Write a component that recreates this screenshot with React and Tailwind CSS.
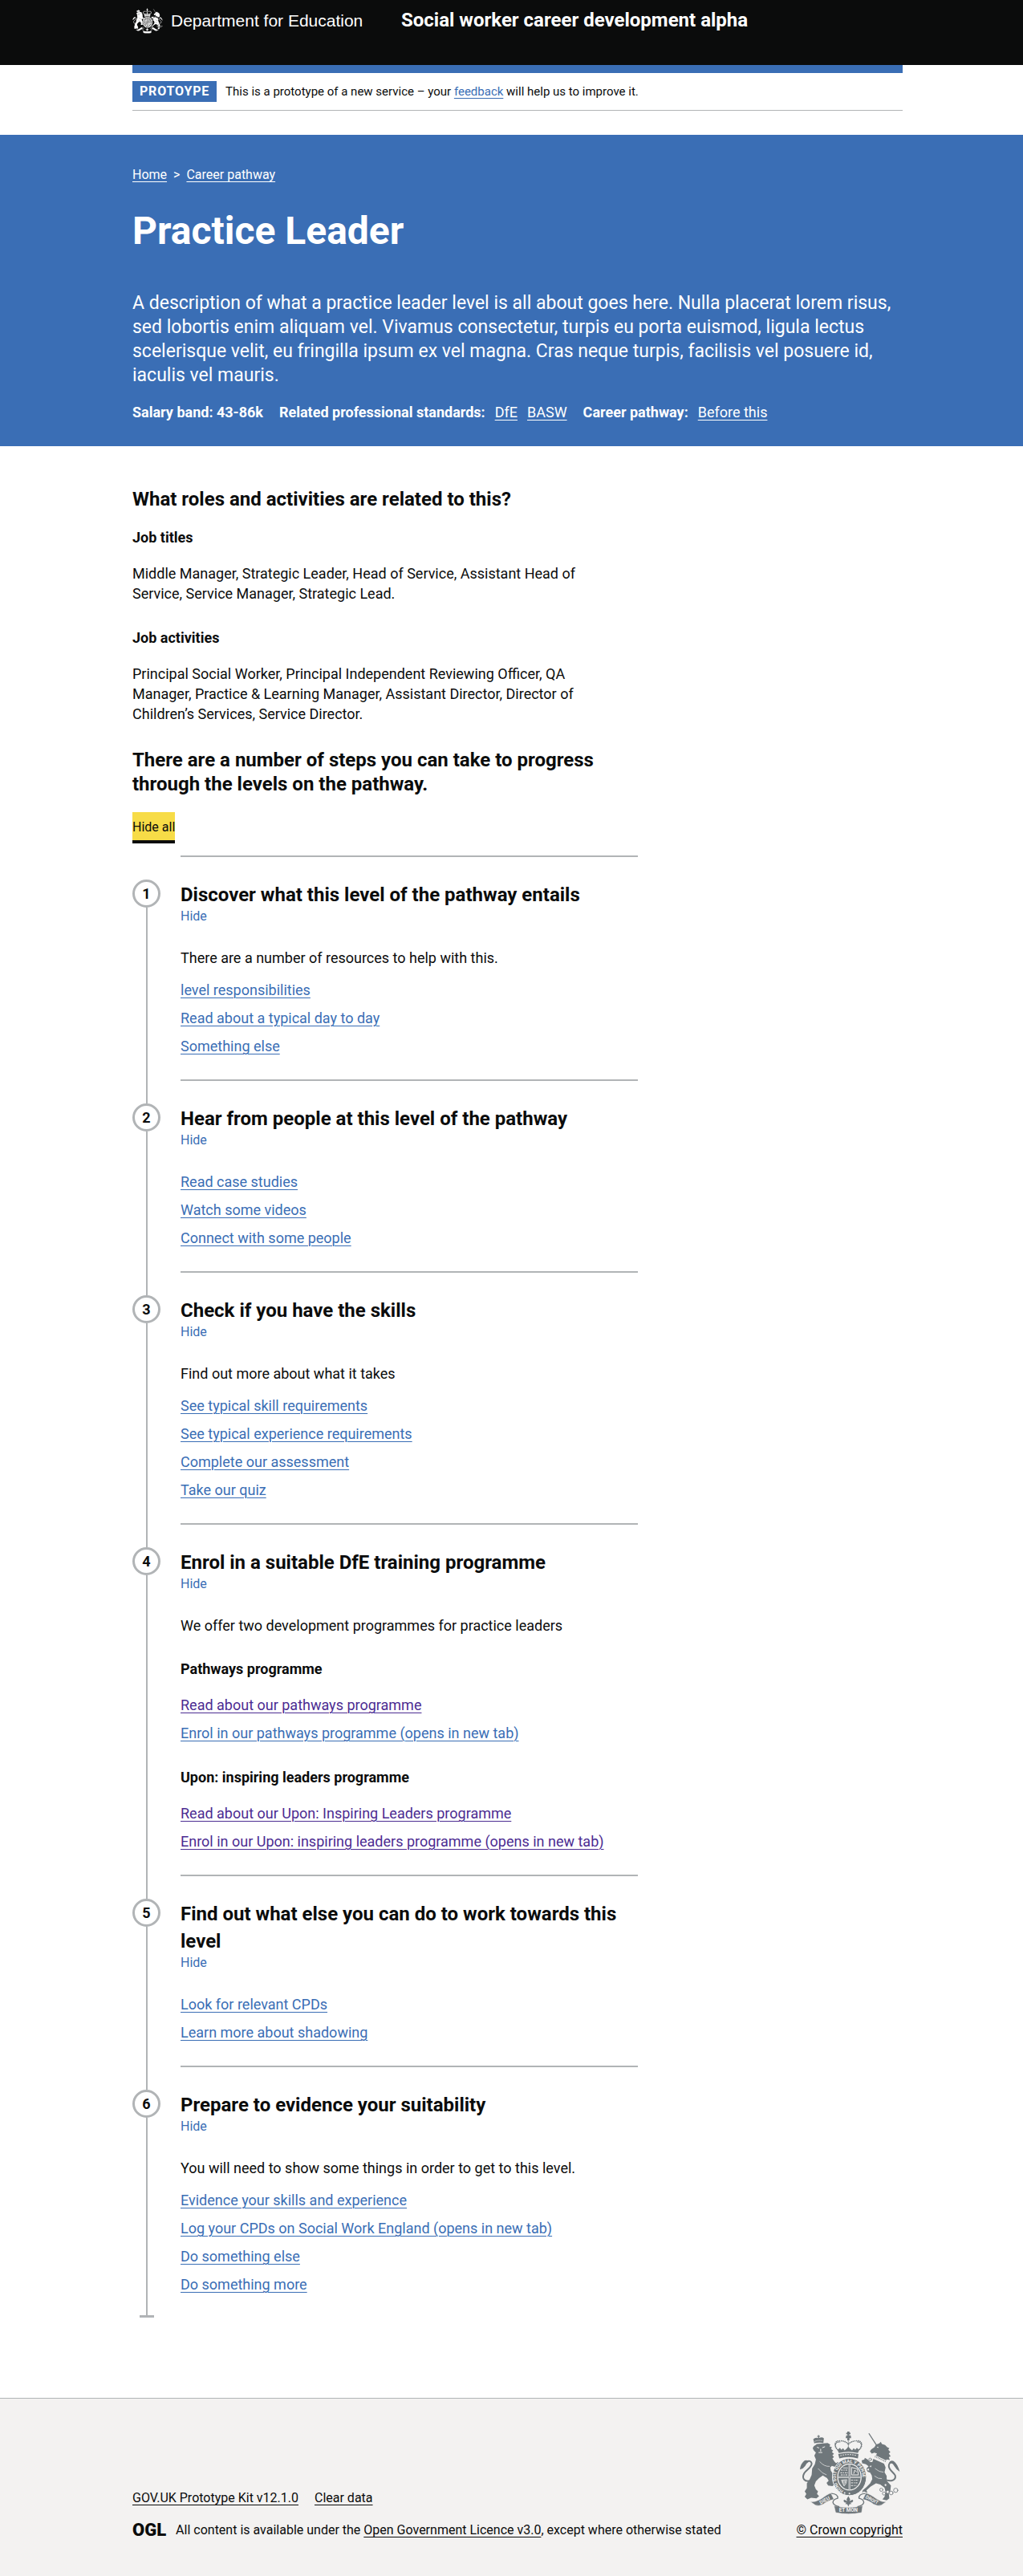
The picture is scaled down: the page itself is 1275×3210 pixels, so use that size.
const focusRing = "focus-visible:outline-3 focus-visible:outline-[#ffdd00]";
const blueLink = "text-[#3a6eb5] underline underline-offset-3 decoration-1 " + focusRing;
const purpleLink = "text-[#4c2c92] underline underline-offset-3 decoration-1 " + focusRing;
const whiteLink = "font-normal text-white underline underline-offset-3 decoration-1 " + focusRing;
const darkLink = "text-[#0b0c0c] underline underline-offset-3 decoration-1 " + focusRing;

function Container({ className = "", children }) {
  return (
    <div className={"px-8 lg:pr-0 lg:pl-[15px] " + className}>
      <div className="mx-auto max-w-[960px]">{children}</div>
    </div>
  );
}

/* Royal coat of arms. `ink` is the drawing, `paper` is the ground seen through it. */
function RoyalArms({ className, ink, paper, motto = false }) {
  return (
    <svg viewBox="33 35 380 312" className={className} aria-hidden="true">
      <g fill={ink} stroke="none">
        {/* lion's crown */}
        <path d="M90 82 L86 66 Q94 58 104 62 L104 57 L101 57 L101 54 L104 54 L104 51 L108 51 L108 54 L111 54 L111 57 L108 57 L108 61 Q120 56 126 63 L124 80 Q106 76 90 82 Z" />
        {/* lion */}
        <path d="M88 92 L100 84 L124 82 L140 80 L150 86 L147 93 L156 96 L153 103 L161 109 L156 114 L164 121 L158 126 L164 133 L158 138 L166 150 L172 156 L178 152 L184 158 L178 166 L168 170 L156 166 L150 172 L152 184 L160 196 L166 206 L160 212 L168 218 L160 228 L166 236 L158 242 L142 240 L136 230 L144 222 L138 212 L122 202 L108 212 L96 224 L90 240 L96 254 L104 262 L100 272 L108 280 L98 288 L78 286 L64 292 L54 282 L60 272 L54 262 L62 250 L62 232 L72 218 L80 200 L82 176 L92 160 L96 142 L90 128 L96 116 L88 108 L84 100 Z" />
        {/* lion's tail tuft */}
        <path d="M36 180 Q38 158 54 146 Q64 142 70 150 Q60 156 56 166 Q50 176 36 180 Z" />
        {/* unicorn head and neck */}
        <path d="M299 112 L304 104 L316 96 L322 86 L334 82 L340 76 L344 84 L356 88 L364 96 L372 100 L368 106 L376 114 L370 120 L377 130 L370 134 L374 144 L362 142 L356 152 L316 134 L326 120 L316 116 L306 120 Z" />
        {/* unicorn body */}
        <path d="M312 140 L352 158 L358 172 L354 190 L362 204 L362 222 L378 240 L376 258 L370 270 L372 288 L362 296 L346 292 L354 282 L358 266 L354 248 L338 236 L322 232 L302 244 L286 258 L290 268 L276 262 L270 268 L272 258 L286 246 L300 232 L308 216 L306 202 L300 192 L290 188 L286 176 L294 168 L284 160 L270 156 L268 146 L278 142 L280 136 L290 142 L300 152 L308 152 Z" />
        {/* unicorn's tail tuft */}
        <path d="M411 188 Q404 160 388 148 Q376 142 370 156 Q384 154 390 166 Q398 180 411 188 Z" />
      </g>
      <g fill="none" stroke={ink} strokeLinecap="round">
        <path strokeWidth="6" d="M76 222 C52 228 42 212 52 194 C60 180 82 172 80 156 C78 148 70 146 62 149" />
        <path strokeWidth="6" d="M356 218 C380 228 398 218 394 202 C388 190 370 182 370 166 C370 158 376 152 382 153" />
        <path strokeWidth="4" strokeLinecap="butt" d="M295 44 L326 92" />
        {/* chain */}
        <g strokeWidth="2.5" fill={paper}>
          <circle cx="300" cy="142" r="5" />
          <circle cx="293" cy="180" r="5" />
          <circle cx="302" cy="168" r="4" />
          <circle cx="358" cy="238" r="5" />
          <circle cx="342" cy="256" r="6" />
          <circle cx="352" cy="270" r="6" />
          <circle cx="366" cy="264" r="6" />
          <circle cx="379" cy="268" r="7" />
          <circle cx="396" cy="258" r="8" />
        </g>
      </g>
      {/* faces and collar picked out in the ground colour */}
      <g fill="none" stroke={paper} strokeWidth="3">
        <path d="M100 96 L108 99 M120 98 L130 94 M114 102 L114 112 M106 116 L120 116" />
        <path d="M92 74 Q106 68 122 72" strokeDasharray="3 3" />
        <path d="M318 130 L358 150" strokeWidth="9" />
        <path d="M326 96 L331 97" />
        <path d="M110 150 Q128 170 148 168 M104 176 Q120 196 136 200" strokeWidth="2" />
        <path d="M318 176 Q334 190 350 190 M316 204 Q330 216 344 214" strokeWidth="2" />
      </g>
      <path fill="none" stroke={ink} strokeWidth="4" strokeDasharray="3 3" d="M318 130 L358 150" />

      {/* crown */}
      <g fill="none" stroke={ink}>
        <path strokeWidth="5" strokeLinecap="round" strokeDasharray="0.1 6.5" d="M182 110 C160 90 166 70 188 72 C202 72 214 78 218 86 C222 78 236 72 250 72 C270 70 276 92 254 110" />
        <path strokeWidth="4" strokeLinecap="round" strokeDasharray="0.1 6" d="M218 70 L218 104" />
        <path strokeWidth="3" d="M180 108 C162 92 168 75 188 76 M256 108 C274 92 268 75 250 76" />
      </g>
      <g fill={ink}>
        <path d="M214 70 L214 62 L208 62 L209 56 L211 51 L215 53 L214 47 L210 47 L210 42 L214 42 L214 37 L222 37 L222 42 L226 42 L226 47 L222 47 L221 53 L226 51 L228 56 L228 62 L222 62 L222 70 Z" />
        <path d="M178 106 L186 98 L192 106 L198 100 L204 108 L211 102 L218 94 L225 102 L232 108 L238 100 L244 106 L250 98 L258 106 L254 118 Q218 108 182 118 Z" />
        <path d="M180 122 Q218 112 256 122 L254 138 Q218 128 184 138 Z" />
      </g>
      <path fill="none" stroke={paper} strokeWidth="3" strokeDasharray="5 4" d="M188 128 Q218 119 250 128" />

      {/* garter and shield */}
      <ellipse cx="222" cy="208" rx="64" ry="70" fill={ink} stroke={paper} strokeWidth="3" />
      <ellipse cx="222" cy="208" rx="46" ry="51" fill={paper} />
      <ellipse cx="222" cy="208" rx="42" ry="47" fill={ink} />
      <g fill="none" stroke={paper}>
        <path strokeWidth="6" d="M222 160 V256 M180 208 H264" />
        <path strokeWidth="3" strokeDasharray="7 3 4 3" d="M190 182 H216 M188 192 H217 M190 200 H217 M228 220 H256 M228 230 H254 M228 240 H248" />
        <path strokeWidth="3" d="M230 172 L252 178 L256 200 L230 200 Z M238 196 L242 182 L250 190" />
        <path strokeWidth="2.5" d="M192 220 L212 218 Q212 234 202 242 Z M197 221 V230 M202 220 V237 M207 220 V232" />
        <path strokeWidth="2.5" d="M198 174 H216" />
      </g>
      <path fill="none" stroke={ink} strokeWidth="2" d="M222 160 V256 M180 208 H264" />
      {motto ? (
        <>
          <path id="garter" fill="none" d="M200 259 A50 55 0 1 1 246 257" />
          <text fill={paper} fontFamily="Roboto, sans-serif" fontWeight="700" fontSize="17">
            <textPath href="#garter">HONI SOIT QUI MAL Y PENSE</textPath>
          </text>
        </>
      ) : (
        <ellipse cx="222" cy="208" rx="55" ry="60" fill="none" stroke={paper} strokeWidth="8" strokeDasharray="3 5" />
      )}
      <g fill={paper}>
        <circle cx="204" cy="268" r="3" />
        <circle cx="222" cy="270" r="3" />
      </g>

      {/* scroll */}
      <g fill={ink} stroke={paper} strokeWidth="2">
        <path d="M74 300 Q92 304 116 290 Q140 272 152 268 L164 292 Q142 296 124 310 Q106 320 94 314 Z" />
        <path d="M362 300 Q344 304 324 290 Q300 272 284 268 L272 292 Q296 296 312 310 Q330 320 342 314 Z" />
        <path d="M164 316 Q218 328 272 316 L268 342 Q218 352 170 342 Z" />
      </g>
      <g fill="none" stroke={ink} strokeWidth="4">
        <path d="M154 270 Q180 272 178 288 Q160 292 160 304 Q164 316 184 320" />
        <path d="M282 270 Q256 272 258 288 Q276 292 276 304 Q272 316 252 320" />
      </g>
      <path fill={ink} d="M218 280 L225 292 L222 299 L228 296 Q236 290 236 299 Q234 305 225 305 L230 309 L222 310 L218 319 L214 310 L206 309 L211 305 Q202 305 200 299 Q200 290 208 296 L214 299 L211 292 Z" />
      {motto && (
        <g fill={paper} fontFamily="Roboto, sans-serif" fontWeight="700" fontSize="19" textAnchor="middle">
          <text transform="translate(132 301) rotate(-28)">DIEU</text>
          <text transform="translate(304 299) rotate(28)" fontSize="18">DROIT</text>
          <text x="218" y="340">ET MON</text>
        </g>
      )}
    </svg>
  );
}

const steps = [
  {
    title: "Discover what this level of the pathway entails",
    intro: "There are a number of resources to help with this.",
    groups: [{ links: [["level responsibilities"], ["Read about a typical day to day"], ["Something else"]] }],
  },
  {
    title: "Hear from people at this level of the pathway",
    groups: [{ links: [["Read case studies"], ["Watch some videos"], ["Connect with some people"]] }],
  },
  {
    title: "Check if you have the skills",
    intro: "Find out more about what it takes",
    groups: [
      {
        links: [
          ["See typical skill requirements"],
          ["See typical experience requirements"],
          ["Complete our assessment"],
          ["Take our quiz"],
        ],
      },
    ],
  },
  {
    title: "Enrol in a suitable DfE training programme",
    intro: "We offer two development programmes for practice leaders",
    groups: [
      {
        heading: "Pathways programme",
        links: [
          ["Read about our pathways programme", true],
          ["Enrol in our pathways programme (opens in new tab)"],
        ],
      },
      {
        heading: "Upon: inspiring leaders programme",
        links: [
          ["Read about our Upon: Inspiring Leaders programme", true],
          ["Enrol in our Upon: inspiring leaders programme (opens in new tab)", true],
        ],
      },
    ],
  },
  {
    title: "Find out what else you can do to work towards this level",
    groups: [{ links: [["Look for relevant CPDs"], ["Learn more about shadowing"]] }],
  },
  {
    title: "Prepare to evidence your suitability",
    intro: "You will need to show some things in order to get to this level.",
    groups: [
      {
        links: [
          ["Evidence your skills and experience"],
          ["Log your CPDs on Social Work England (opens in new tab)"],
          ["Do something else"],
          ["Do something more"],
        ],
      },
    ],
  },
];

function Step({ number, step, first, last }) {
  return (
    <li className="flex gap-[25px]">
      <div className="flex w-[35px] shrink-0 flex-col items-center">
        <span className={first ? "h-[30px] w-[2px]" : "h-[30px] w-[2px] bg-[#b1b4b6]"} />
        <span className="flex size-[35px] items-center justify-center rounded-full border-3 border-[#b1b4b6] text-[18px] leading-[25px] font-bold">
          {number}
        </span>
        <span className="w-[2px] grow bg-[#b1b4b6]" />
        {last && <span className="h-[3px] w-[18px] bg-[#b1b4b6]" />}
      </div>
      <div className="grow basis-0 border-t-2 border-[#b1b4b6] pt-[30px] pb-[29px]">
        <h2 className="text-[24px] leading-[34px] font-bold">{step.title}</h2>
        <button type="button" className={"block cursor-pointer text-[16px] leading-[20px] text-[#3a6eb5] " + focusRing}>
          Hide
        </button>
        <div className="pt-[29px]">
          {step.intro && <p className={step.groups[0].heading ? "mb-[29px]" : "mb-[15px]"}>{step.intro}</p>}
          <div className="flex flex-col gap-[30px]">
            {step.groups.map((group, i) => (
              <div key={i}>
                {group.heading && <h3 className="mb-5 font-bold">{group.heading}</h3>}
                <ul className="flex flex-col gap-[10px]">
                  {group.links.map(([label, visited]) => (
                    <li key={label}>
                      <a href="#" className={visited ? purpleLink : blueLink}>
                        {label}
                      </a>
                    </li>
                  ))}
                </ul>
              </div>
            ))}
          </div>
        </div>
      </div>
    </li>
  );
}

export default function App() {
  return (
    <div className="min-h-screen bg-white font-['Roboto',sans-serif] text-[18px] leading-[25px] text-[#0b0c0c]">
      <header className="bg-[#0b0c0c] text-white">
        <Container>
          <div className="grid min-h-[81px] grid-cols-[auto_1fr] items-start gap-x-5 pt-[10px] sm:grid-cols-[335px_1fr] sm:gap-x-0">
            <a href="#" className={"flex items-center gap-[10px] " + focusRing}>
              <RoyalArms className="h-8 w-[38px]" ink="#ffffff" paper="#0b0c0c" />
              <span className="font-['Liberation_Sans',sans-serif] text-[21px] leading-[32px]">
                Department for Education
              </span>
            </a>
            <a href="#" className={"text-[24px] leading-[30px] font-bold " + focusRing}>
              Social worker career development alpha
            </a>
          </div>
        </Container>
      </header>

      <Container>
        <div className="border-t-10 border-[#3a6eb5]">
          <div className="flex items-center gap-[11px] border-b border-[#b1b4b6] py-[10px] text-[15px]">
            <strong className="bg-[#3a6eb5] px-[9px] text-[16px] leading-[26px] font-bold tracking-wider text-white uppercase">
              Protoype
            </strong>
            <p>
              This is a prototype of a new service – your{" "}
              <a href="#" className={blueLink}>
                feedback
              </a>{" "}
              will help us to improve it.
            </p>
          </div>
        </div>
      </Container>

      <section className="mt-[30px] bg-[#3a6eb5] text-white">
        <Container className="pt-10 pb-[30px]">
          <nav aria-label="Breadcrumb" className="flex gap-2 text-[16px] leading-[20px]">
            <a href="#" className={whiteLink}>
              Home
            </a>
            <span>&gt;</span>
            <a href="#" className={whiteLink}>
              Career pathway
            </a>
          </nav>
          <h1 className="mt-[35px] text-[48px] leading-[50px] font-bold">Practice Leader</h1>
          <p className="mt-[50px] text-[23px] leading-[30px]">
            A description of what a practice leader level is all about goes here. Nulla placerat lorem risus, sed
            lobortis enim aliquam vel. Vivamus consectetur, turpis eu porta euismod, ligula lectus scelerisque velit,
            eu fringilla ipsum ex vel magna. Cras neque turpis, facilisis vel posuere id, iaculis vel mauris.
          </p>
          <div className="mt-[18px] flex flex-wrap gap-x-5 font-bold">
            <span>Salary band: 43-86k</span>
            <span className="flex gap-3">
              Related professional standards:
              <a href="#" className={whiteLink}>
                DfE
              </a>
              <a href="#" className={whiteLink}>
                BASW
              </a>
            </span>
            <span className="flex gap-3">
              Career pathway:
              <a href="#" className={whiteLink}>
                Before this
              </a>
            </span>
          </div>
        </Container>
      </section>

      <main>
        <Container className="pt-[51px] pb-[100px]">
          <div className="max-w-[630px]">
            <div className="max-w-[600px]">
              <h2 className="mb-5 text-[24px] leading-[30px] font-bold">What roles and activities are related to this?</h2>
              <h3 className="mb-5 font-bold">Job titles</h3>
              <p className="mb-[30px]">
                Middle Manager, Strategic Leader, Head of Service, Assistant Head of Service, Service Manager,
                Strategic Lead.
              </p>
              <h3 className="mb-5 font-bold">Job activities</h3>
              <p className="mb-[30px]">
                Principal Social Worker, Principal Independent Reviewing Officer, QA Manager, Practice &amp; Learning
                Manager, Assistant Director, Director of Children’s Services, Service Director.
              </p>
              <h2 className="mb-5 text-[24px] leading-[30px] font-bold">
                There are a number of steps you can take to progress through the levels on the pathway.
              </h2>
            </div>
            <button
              type="button"
              className="mb-[15px] block cursor-pointer border-b-4 border-[#0b0c0c] bg-[#f7dc47] pt-[9px] pb-[6px] text-[16px] leading-[20px]"
            >
              Hide all
            </button>
            <ol>
              {steps.map((step, i) => (
                <Step key={step.title} number={i + 1} step={step} first={i === 0} last={i === steps.length - 1} />
              ))}
            </ol>
          </div>
        </Container>
      </main>

      <footer className="border-t border-[#b1b4b6] bg-[#f3f2f1]">
        <Container className="pt-10 pb-12">
          <div className="flex flex-wrap items-end justify-between gap-x-8 gap-y-5 text-[16px] leading-[20px]">
            <div>
              <ul className="mb-5 flex flex-wrap gap-x-5">
                <li>
                  <a href="#" className={darkLink}>
                    GOV.UK Prototype Kit v12.1.0
                  </a>
                </li>
                <li>
                  <a href="#" className={darkLink}>
                    Clear data
                  </a>
                </li>
              </ul>
              <div className="flex items-center gap-3">
                <span className="text-[22px] leading-[20px] font-black">OGL</span>
                <p>
                  All content is available under the{" "}
                  <a href="#" className={darkLink}>
                    Open Government Licence v3.0
                  </a>
                  , except where otherwise stated
                </p>
              </div>
            </div>
            <a href="#" className={"flex flex-col items-center gap-[10px] " + darkLink}>
              <RoyalArms className="h-[104px] w-[126px]" ink="#6f777b" paper="#f3f2f1" motto />
              © Crown copyright
            </a>
          </div>
        </Container>
      </footer>
    </div>
  );
}
